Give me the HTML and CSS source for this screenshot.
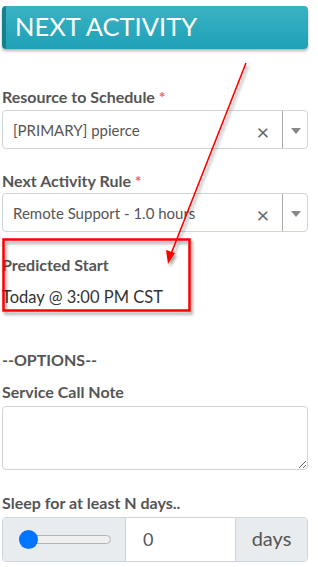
FILE: index.html
```html
<!DOCTYPE html>
<html lang="en">
<head>
    <meta charset="UTF-8">
    <title>Next Activity</title>
    <link rel="stylesheet" href="styles.css">
</head>
<body>
<div id="page">
    <div class="header">NEXT ACTIVITY</div>

    <label class="lbl first">Resource to Schedule <span class="req">*</span></label>
    <div class="sel">
        <span class="sel-text">[PRIMARY] ppierce</span>
        <span class="sel-clear">&times;</span>
        <span class="sel-arrow"></span>
    </div>

    <label class="lbl second">Next Activity Rule <span class="req">*</span></label>
    <div class="sel">
        <span class="sel-text">Remote Support - 1.0 hours</span>
        <span class="sel-clear">&times;</span>
        <span class="sel-arrow"></span>
    </div>

    <div class="lbl predicted">Predicted Start</div>
    <div class="when">Today @ 3:00 PM CST</div>

    <div class="lbl options">--OPTIONS--</div>

    <label class="lbl note">Service Call Note</label>
    <textarea class="note-box"></textarea>

    <label class="lbl sleep">Sleep for at least N days..</label>
    <div class="group">
        <div class="slider-cell">
            <div class="track"><span class="thumb"></span></div>
        </div>
        <div class="num">0</div>
        <div class="addon">days</div>
    </div>

    <!-- annotation drawn over the form -->
    <svg class="mark" width="318" height="320" viewBox="0 0 318 320">
        <defs>
            <filter id="sh" x="-20%" y="-20%" width="140%" height="140%">
                <feDropShadow dx="2" dy="3" stdDeviation="1.5" flood-color="#000" flood-opacity="0.35"/>
            </filter>
        </defs>
        <g filter="url(#sh)">
            <rect x="3.5" y="239.5" width="186" height="71" fill="none" stroke="#ff0000" stroke-width="2.5"/>
            <line x1="246" y1="63" x2="171" y2="254" stroke="#ff0000" stroke-width="1.6"/>
            <polygon points="168,264 166,250 175,253" fill="#ff0000"/>
        </g>
    </svg>
</div>
</body>
</html>
```

FILE: styles.css
```css
*{
    margin: 0;
    padding: 0;
    box-sizing: border-box;
}
body{
    font-family: Lato, "Open Sans", sans-serif;
    color: #555;
    background: #fff;
}
#page{
    position: relative;
    width: 306px;
    margin-left: 2px;
    padding-top: 6px;
}
.header{
    height: 43px;
    background: linear-gradient(#3bb2c4, #1ea1b7);
    border-left: 4px solid #17808d;
    border-radius: 4px;
    box-shadow: 0 2px 3px rgba(0,0,0,.3);
    color: #fff;
    font-size: 25.5px;
    line-height: 41px;
    padding-left: 9px;
}
.lbl{
    display: block;
    font-size: 16px;
    font-weight: bold;
    line-height: 20px;
    color: #555;
}
.req{
    color: #ec6a57;
}
.first{
    margin-top: 38px;
    margin-bottom: 3px;
}
.second{
    margin-top: 22px;
    margin-bottom: 2px;
}
.sel{
    display: flex;
    align-items: center;
    height: 39px;
    border: 1px solid #ced4da;
    border-radius: 4px;
}
.sel-text{
    flex: 1;
    padding-left: 10px;
    font-size: 15px;
    color: #555;
}
.sel-clear{
    width: 34px;
    text-align: center;
    font-size: 22px;
    color: #666;
    margin-top: 3px;
    padding-right: 4px;
}
.sel-arrow{
    width: 25px;
    height: 100%;
    border-left: 1px solid #aaa;
    position: relative;
}
.sel-arrow:after{
    content: "";
    position: absolute;
    left: 8px;
    top: 17px;
    border-left: 5px solid transparent;
    border-right: 5px solid transparent;
    border-top: 6px solid #888;
}
.predicted{
    margin-top: 23px;
}
.when{
    margin-top: 12px;
    font-size: 16.5px;
    line-height: 20px;
    color: #333;
}
.options{
    margin-top: 43px;
}
.note{
    margin-top: 12px;
}
.note-box{
    display: block;
    width: 100%;
    height: 64px;
    margin-top: 4px;
    border: 1px solid #ced4da;
    border-radius: 4px;
    resize: vertical;
}
.sleep{
    margin-top: 23px;
}
.group{
    display: flex;
    height: 45px;
    margin-top: 4px;
    border: 1px solid #ced4da;
    border-radius: 4px;
    overflow: hidden;
}
.slider-cell{
    width: 123px;
    background: #e9ecef;
    border-right: 1px solid #ced4da;
    display: flex;
    align-items: center;
    padding-left: 16px;
}
.track{
    position: relative;
    width: 92px;
    height: 9px;
    background: #efefef;
    border: 1px solid #b2b2b2;
    border-radius: 5px;
}
.thumb{
    position: absolute;
    left: -1px;
    top: -6px;
    width: 19px;
    height: 19px;
    border-radius: 50%;
    background: #0075ff;
}
.num{
    width: 110px;
    border-right: 1px solid #ced4da;
    font-size: 18px;
    line-height: 43px;
    padding-left: 17px;
    color: #555;
}
.addon{
    flex: 1;
    background: #e9ecef;
    font-size: 20px;
    line-height: 41px;
    text-align: center;
    color: #555;
}
.mark{
    position: absolute;
    left: -2px;
    top: 0;
    pointer-events: none;
}
```
